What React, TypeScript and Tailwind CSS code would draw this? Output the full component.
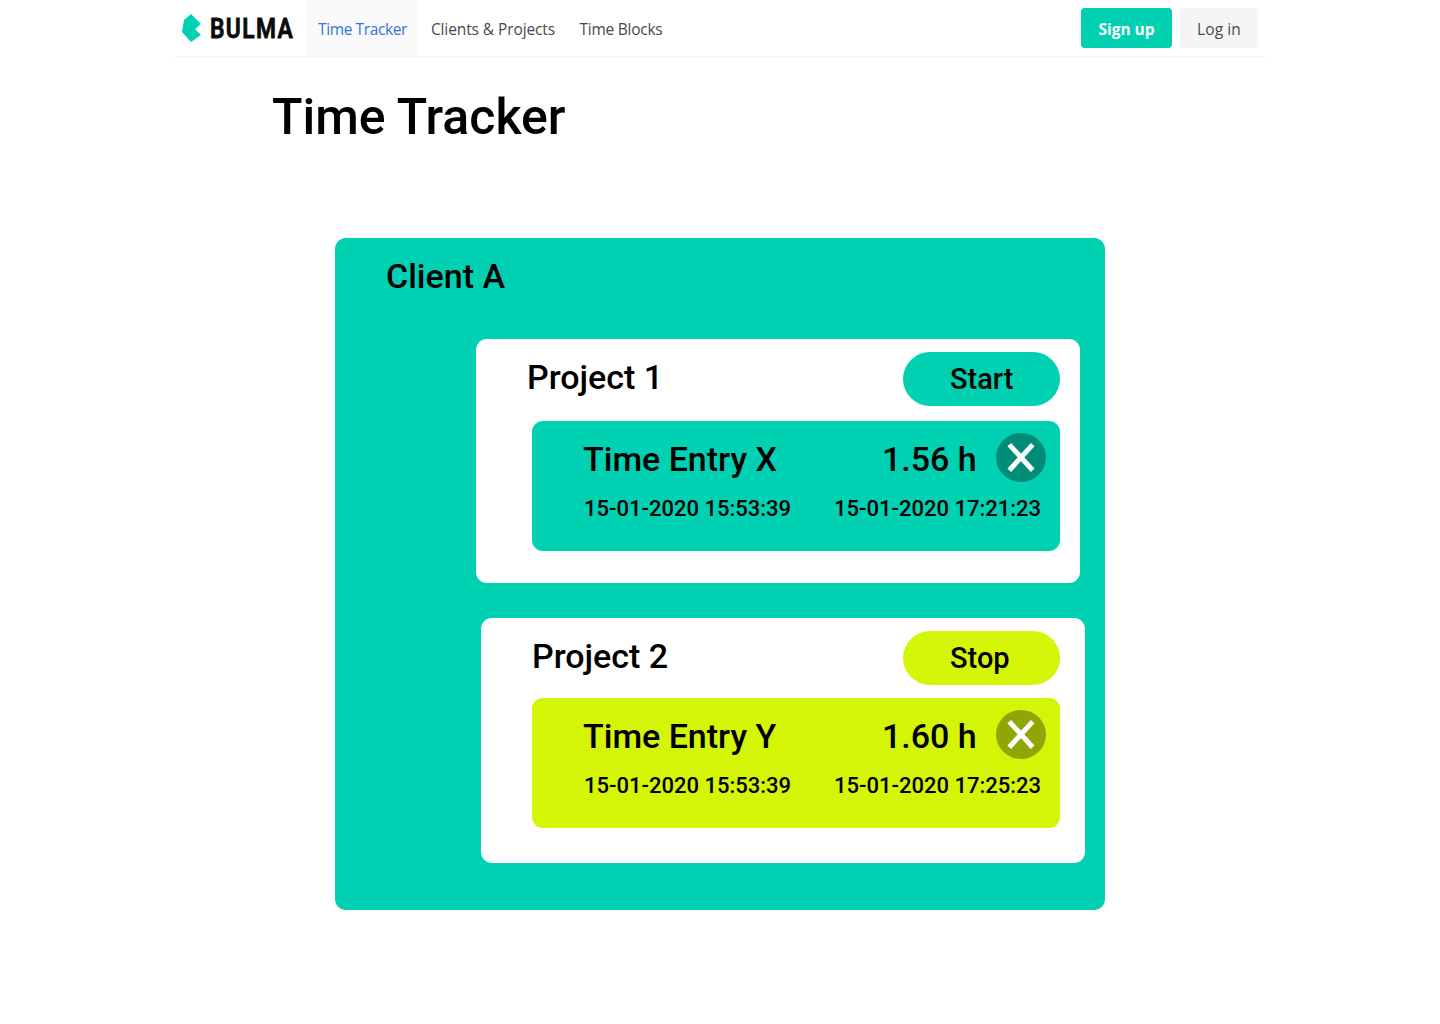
const Cross = ({ bg }: { bg: string }) => (
  <svg className="block h-[50px] w-[50px]" viewBox="0 0 50 50">
    <ellipse cx="25" cy="24.5" rx="25" ry="24.5" fill={bg} />
    <path d="M13.3 11.6 36.7 37.2M36.7 11.6 13.3 37.2" stroke="#fff" strokeWidth="5" fill="none" />
  </svg>
);

type EntryProps = { name: string; hours: string; from: string; to: string; bg: string; dot: string };

const Entry = ({ name, hours, from, to, bg, dot }: EntryProps) => (
  <div className={`h-[130px] w-[528px] rounded-[11px] pt-3 pl-[51px] ${bg}`}>
    <div className="flex h-[50px]">
      <span className="w-[299px] pt-[6px] text-[34px] leading-10">{name}</span>
      <span className="w-[114px] pt-[6px] text-[34px] leading-10">{hours}</span>
      <Cross bg={dot} />
    </div>
    <div className="flex pt-3 pl-px text-[22px] leading-[28px]">
      <span className="w-[250px]">{from}</span>
      <span>{to}</span>
    </div>
  </div>
);

const Logo = () => (
  <svg className="h-9 w-[118px] overflow-visible" viewBox="0 -4 118 36">
    <path d="M0 18 2 6 9 0 19 10 13 15 19 21 9 28Z" fill="#00d1b2" />
    <text
      x="28"
      y="23.7"
      textLength="84"
      lengthAdjust="spacingAndGlyphs"
      className="fill-[#0a0a0a] stroke-[#0a0a0a] font-['Roboto',sans-serif] text-[27px] font-semibold tracking-[1.6px]"
      strokeWidth="0.8"
      strokeLinejoin="round"
    >
      BULMA
    </text>
  </svg>
);

export default function App() {
  return (
    <div className="h-[1024px] w-[1440px] overflow-hidden bg-white font-['Roboto',sans-serif] font-medium text-black">
      <nav className="mx-auto flex h-[57px] w-[1096px] border-b border-[#f5f5f5] font-['Open_Sans',sans-serif] text-[15.5px] font-normal text-[#4a4a4a]">
        <div className="flex w-[134px] items-center pl-[10px]">
          <Logo />
        </div>
        <span className="flex w-[113px] items-center justify-center bg-[#fafafa] pt-1 tracking-[-0.4px] whitespace-nowrap text-[#3273dc]">Time Tracker</span>
        <span className="flex w-[148px] items-center justify-center pt-1 tracking-[-0.1px] whitespace-nowrap">Clients &amp; Projects</span>
        <span className="flex w-[108px] items-center justify-center pt-1 tracking-[-0.25px] whitespace-nowrap">Time Blocks</span>
        <div className="ml-auto flex gap-2 pt-2 pr-[10px]">
          <button className="h-10 w-[91px] rounded bg-[#00d1b2] pt-[3px] font-bold text-white">Sign up</button>
          <button className="h-10 w-[78px] rounded bg-[#f5f5f5] pt-[3px] tracking-[0.1px]">Log in</button>
        </div>
      </nav>
      <h1 className="pt-8 pl-[272px] text-[50px] leading-[56px]">Time Tracker</h1>
      <main className="mx-auto mt-[93px] h-[672px] w-[770px] rounded-[11px] bg-[#00d1b2]">
        <h2 className="h-[101px] pt-[18px] pl-[51px] text-[34px] leading-10">Client A</h2>
        <section className="ml-[141px] h-[244px] w-[604px] rounded-[11px] bg-white">
          <div className="flex h-[82px] pt-[13px] pl-[51px]">
            <h3 className="w-[376px] pt-[5px] text-[34px] leading-10">Project 1</h3>
            <button className="h-[54px] w-[157px] rounded-full bg-[#00d1b2] pt-px pl-[47px] text-left text-[29px]">Start</button>
          </div>
          <div className="pl-14">
            <Entry name="Time Entry X" hours="1.56 h" from="15-01-2020 15:53:39" to="15-01-2020 17:21:23" bg="bg-[#00d1b2]" dot="#008c77" />
          </div>
        </section>
        <section className="mt-[35px] ml-[146px] h-[245px] w-[604px] rounded-[11px] bg-white">
          <div className="flex h-20 pt-[13px] pl-[51px]">
            <h3 className="w-[371px] pt-[5px] text-[34px] leading-10">Project 2</h3>
            <button className="h-[54px] w-[157px] rounded-full bg-[#d4f505] pt-px pl-[47px] text-left text-[29px]">Stop</button>
          </div>
          <div className="pl-[51px]">
            <Entry name="Time Entry Y" hours="1.60 h" from="15-01-2020 15:53:39" to="15-01-2020 17:25:23" bg="bg-[#d4f505]" dot="#8fa604" />
          </div>
        </section>
      </main>
    </div>
  );
}
